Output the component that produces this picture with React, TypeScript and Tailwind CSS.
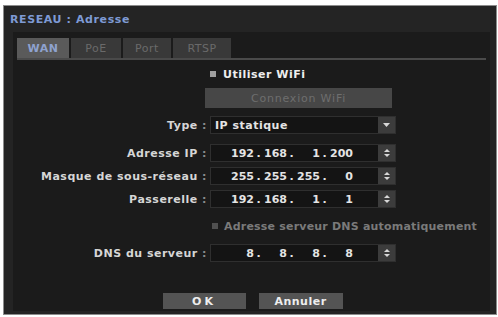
import React from 'react';

const font = { fontFamily: '"DejaVu Sans", Verdana, sans-serif' };

function Spin() {
  return (
    <div className="w-[17px] h-full bg-[#3c3c3c] flex flex-col items-center justify-center gap-[2px]">
      <svg width="6" height="3" viewBox="0 0 6 3"><path d="M0 3 L3 0 L6 3 Z" fill="#d8d8d8" /></svg>
      <svg width="6" height="3" viewBox="0 0 6 3"><path d="M0 0 L3 3 L6 0 Z" fill="#d8d8d8" /></svg>
    </div>
  );
}

function Ip({ parts }: { parts: string[] }) {
  return (
    <div className="flex-1 flex items-center pl-[19px] text-[#e4e4e4]">
      {parts.map((p, i) => (
        <React.Fragment key={i}>
          <span className="w-[24px] text-right">{p}</span>
          {i < 3 && <span className="w-[9px] text-center">.</span>}
        </React.Fragment>
      ))}
    </div>
  );
}

function Row({ label, children, className }: { label: string; children: React.ReactNode; className?: string }) {
  return (
    <div className={'flex items-center h-[18px] ' + (className ?? '')}>
      <div className="w-[190px] text-right text-[#d6d6d6] whitespace-nowrap tracking-[0.5px]">
        {label} <span className="text-[#8a8a8a]">:</span>
      </div>
      <div className="ml-[3px] w-[186px] h-full flex bg-[#141414] border border-[#2f2f2f]">{children}</div>
    </div>
  );
}

export default function App() {
  return (
    <div className="w-[498px] h-[317px] bg-white pt-[5px] pl-[3px] pr-[1px] pb-[2px]" style={font}>
      <div className="h-full border border-[#8c8c8c] bg-[#242424] flex flex-col text-[11px] font-bold leading-none">
        <div className="h-[26px] flex items-center px-[6px] text-[#7e9ad4] tracking-[0.6px]">RESEAU : Adresse</div>
        <div className="flex-1 ml-[9px] mr-[6px] mb-[3px] bg-[#1b1b1b] px-[4px] pt-[6px] flex flex-col">
          <div className="flex gap-[2px] h-[20px] tracking-[0.5px]">
            <div className="w-[52px] bg-[#5a5a5a] text-[#8ea2cf] flex items-center justify-center">WAN</div>
            <div className="w-[50px] bg-[#393939] text-[#6a6a6a] flex items-center justify-center font-normal">PoE</div>
            <div className="w-[48px] bg-[#393939] text-[#6a6a6a] flex items-center justify-center font-normal">Port</div>
            <div className="w-[58px] bg-[#393939] text-[#6a6a6a] flex items-center justify-center font-normal">RTSP</div>
          </div>
          <div className="h-[2px] bg-[#4a4a4a]" />
          <div className="flex items-center h-[12px] mt-[8px] pl-[193px]">
            <div className="w-[6px] h-[6px] bg-[#a0a0a0]" />
            <span className="ml-[7px] text-[#eeeeee] tracking-[0.5px]">Utiliser WiFi</span>
          </div>
          <div className="ml-[188px] w-[187px] h-[20px] mt-[8px] bg-[#474747] text-[#6e6e6e] font-normal flex items-center justify-center tracking-[0.8px]">
            Connexion WiFi
          </div>
          <Row label="Type" className="mt-[8px]">
            <div className="flex-1 flex items-center pl-[4px] text-[#e4e4e4] tracking-[0.5px]">IP statique</div>
            <div className="w-[17px] h-full bg-[#3c3c3c] flex items-center justify-center">
              <svg width="7" height="4" viewBox="0 0 7 4"><path d="M0 0 L3.5 4 L7 0 Z" fill="#d8d8d8" /></svg>
            </div>
          </Row>
          <Row label="Adresse IP" className="mt-[10px]">
            <Ip parts={['192', '168', '1', '200']} />
            <Spin />
          </Row>
          <Row label="Masque de sous-réseau" className="mt-[5px]">
            <Ip parts={['255', '255', '255', '0']} />
            <Spin />
          </Row>
          <Row label="Passerelle" className="mt-[5px]">
            <Ip parts={['192', '168', '1', '1']} />
            <Spin />
          </Row>
          <div className="flex items-center h-[12px] mt-[12px] pl-[195px]">
            <div className="w-[6px] h-[6px] bg-[#505050]" />
            <span className="ml-[6px] text-[#7a7a7a] tracking-[0.2px]">Adresse serveur DNS automatiquement</span>
          </div>
          <Row label="DNS du serveur" className="mt-[12px]">
            <Ip parts={['8', '8', '8', '8']} />
            <Spin />
          </Row>
          <div className="flex justify-center gap-[13px] mt-[31px] pl-[2px]">
            <div className="w-[83px] h-[16px] bg-[#545454] text-[#eeeeee] flex items-center justify-center tracking-[3px]">OK</div>
            <div className="w-[84px] h-[16px] bg-[#545454] text-[#eeeeee] flex items-center justify-center tracking-[0.5px]">Annuler</div>
          </div>
        </div>
      </div>
    </div>
  );
}
